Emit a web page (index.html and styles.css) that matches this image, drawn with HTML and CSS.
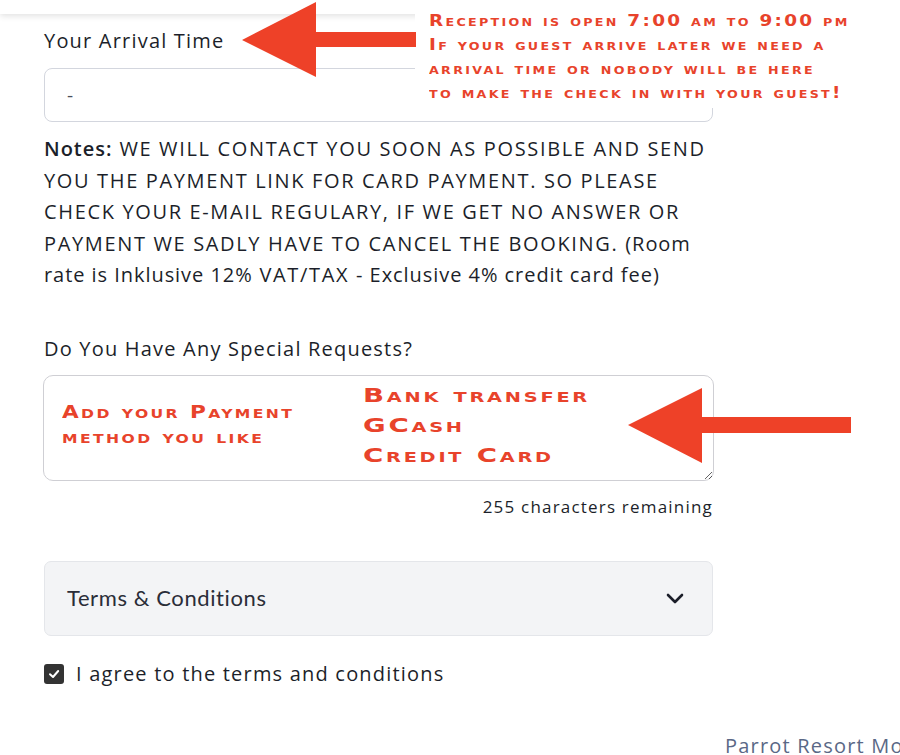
FILE: index.html
```html
<!DOCTYPE html>
<html lang="en">
  <head>
    <meta charset="UTF-8" />
    <meta name="viewport" content="width=device-width, initial-scale=1.0" />
    <title>Booking - Guest Details</title>
    <link rel="stylesheet" href="styles.css">
  </head>
  <body>
    <div class="topBar"></div>
    <div class="bookingForm">
      <label class="fieldLabel" for="arrivalTime">Your Arrival Time</label>
      <div class="selectBox" id="arrivalTime">-</div>
      <p class="notes"><b class="notesTitle">Notes:</b> WE WILL CONTACT YOU SOON AS POSSIBLE AND SEND
        YOU THE PAYMENT LINK FOR CARD PAYMENT. SO PLEASE CHECK YOUR E-MAIL REGULARY, IF WE GET
        NO ANSWER OR PAYMENT WE SADLY HAVE TO CANCEL THE BOOKING. <span class="lower">(Room rate is Inklusive 12%</span>
        VAT/TAX <span class="lower">- Exclusive 4% credit card fee)</span></p>
      <label class="fieldLabel requestsLabel" for="requests">Do You Have Any Special Requests?</label>
      <textarea class="textBox" id="requests" maxlength="255"></textarea>
      <div class="charCount">255 characters remaining</div>
      <div class="terms">
        <span>Terms &amp; Conditions</span>
        <svg class="chevron" width="18" height="11" viewBox="0 0 18 11">
          <path d="M2 2 L9 9 L16 2" fill="none" stroke="#1b1e29" stroke-width="2.6" stroke-linecap="round" stroke-linejoin="round" />
        </svg>
      </div>
      <div class="agree">
        <span class="checkBox">
          <svg width="14" height="14" viewBox="0 0 14 14">
            <path d="M3 7.2 L6 10 L11.2 4" fill="none" stroke="#ffffff" stroke-width="2" stroke-linecap="round" stroke-linejoin="round" />
          </svg>
        </span>
        <span>I agree to the terms and conditions</span>
      </div>
    </div>
    <footer class="footer">Parrot Resort Mo</footer>

    <!-- screenshot annotations drawn on top of the form -->
    <div class="noteBox">
      <div class="wideText">
        Reception is open 7:00 am to 9:00 pm<br />
        If your guest arrive later we need a<br />
        arrival time or nobody will be here<br />
        to make the check in with your guest!
      </div>
    </div>
    <div class="payHint wideText">Add your Payment<br />method you like</div>
    <div class="payList wideText">Bank transfer<br />GCash<br />Credit Card</div>
    <svg class="arrows" width="900" height="755" viewBox="0 0 900 755">
      <polygon points="242,40 316,2 316,32 416,32 416,47 316,47 316,77" fill="#ee4128" />
      <polygon points="628,425 702,388 702,417 851,417 851,433 702,433 702,463" fill="#ee4128" />
    </svg>
  </body>
</html>
```

FILE: styles.css
```css
html,
body {
  margin: 0;
  overflow: hidden;
}
body {
  position: relative;
  width: 900px;
  height: 755px;
  background-color: #ffffff;
  color: #1c1f2a;
  font-family: "Open Sans", "Noto Sans", sans-serif;
  letter-spacing: 1.2px;
}
.topBar {
  height: 14px;
  background-color: #ffffff;
  box-shadow: 0px 2px 6px rgba(0, 0, 0, 0.12);
}
.bookingForm {
  width: 669px;
  margin-left: 44px;
  display: flex;
  flex-direction: column;
}
.fieldLabel {
  display: block;
  font-size: 20px;
  line-height: 24px;
  margin-top: 15px;
}
.selectBox {
  box-sizing: border-box;
  height: 54px;
  margin-top: 15px;
  padding-left: 22px;
  border: 1px solid #d3d6de;
  border-radius: 8px;
  font-size: 19px;
  line-height: 52px;
  color: #4b4f5c;
}
.notes {
  margin: 11px 0px 0px 0px;
  font-size: 20px;
  line-height: 31.5px;
  font-weight: 400;
  letter-spacing: 1.65px;
}
.notesTitle {
  font-weight: 600;
  letter-spacing: 1px;
}
.notes > .lower {
  letter-spacing: 0.95px;
}
.fieldLabel.requestsLabel {
  margin-top: 46px;
}
.textBox {
  box-sizing: border-box;
  width: 671px;
  height: 106px;
  margin: 14px 0px 0px -1px;
  border: 1px solid #cfcfd4;
  border-radius: 10px;
  font-family: inherit;
  font-size: 18px;
}
.charCount {
  margin-top: 15px;
  font-size: 17px;
  line-height: 22px;
  text-align: right;
}
.terms {
  box-sizing: border-box;
  height: 75px;
  margin-top: 43px;
  padding: 0px 28px 0px 22px;
  display: flex;
  align-items: center;
  justify-content: space-between;
  background-color: #f3f4f6;
  border: 1px solid #e4e6ea;
  border-radius: 7px;
  font-family: "Lato", "Open Sans", sans-serif;
  font-size: 22px;
  letter-spacing: 0.6px;
  color: #2a2d38;
}
.terms > span {
  margin-top: -2px;
}
.agree {
  margin-top: 26px;
  display: flex;
  align-items: center;
  gap: 12px;
  font-size: 20px;
  line-height: 24px;
}
.checkBox {
  width: 20px;
  height: 20px;
  border-radius: 3px;
  background-color: #333333;
  display: flex;
  align-items: center;
  justify-content: center;
}
.footer {
  margin-top: 48px;
  padding-left: 725px;
  overflow: hidden;
  white-space: nowrap;
  font-size: 20px;
  line-height: 24px;
  color: #5a6886;
}

/* annotations (an extended bold small-caps face, so stretched) */
.wideText {
  font-family: "DejaVu Sans", sans-serif;
  font-weight: bold;
  font-variant: small-caps;
  color: #e8432b;
  white-space: nowrap;
  transform-origin: left top;
}
.noteBox {
  position: absolute;
  left: 415px;
  top: 0px;
  width: 485px;
  height: 108px;
  box-sizing: border-box;
  padding: 9px 0px 0px 14px;
  background-color: #ffffff;
}
.noteBox > .wideText {
  display: inline-block;
  font-size: 16px;
  line-height: 24px;
  letter-spacing: 2px;
  transform: scaleX(1.15);
}
.payHint {
  position: absolute;
  left: 62px;
  top: 399px;
  font-size: 18px;
  line-height: 25px;
  letter-spacing: 2px;
  transform: scaleX(1.2);
}
.payList {
  position: absolute;
  left: 363px;
  top: 380px;
  font-size: 20px;
  line-height: 30px;
  letter-spacing: 2px;
  transform: scaleX(1.38);
}
.arrows {
  position: absolute;
  left: 0px;
  top: 0px;
  pointer-events: none;
}
```
